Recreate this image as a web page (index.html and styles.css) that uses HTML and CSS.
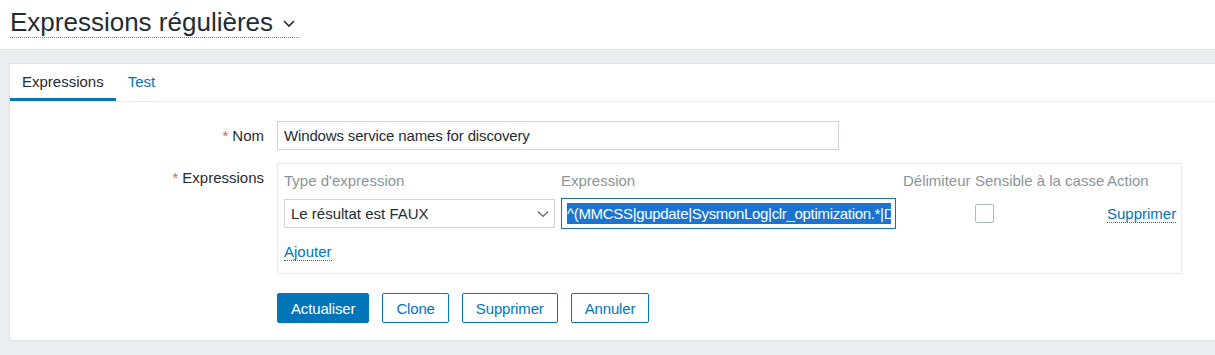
FILE: index.html
```html
<!DOCTYPE html>
<html lang="fr">
<head>
    <meta charset="UTF-8">
    <meta name="viewport" content="width=device-width, initial-scale=1.0">
    <title>Expressions régulières</title>
    <link rel="stylesheet" href="styles.css">
</head>
<body>
    <header class="page-header">
        <h1 class="page-title">
            Expressions régulières
            <svg class="title-chevron" width="14" height="9" viewBox="0 0 14 9">
                <path d="M2 2 L7 7 L12 2" fill="none" stroke="#1f2c33" stroke-width="1.6"/>
            </svg>
        </h1>
    </header>

    <main class="wrapper">
        <section class="panel">
            <nav class="tabs">
                <a class="tab active" href="#">Expressions</a>
                <a class="tab" href="#">Test</a>
            </nav>

            <form class="form-grid">
                <label class="form-label"><span class="req">*</span>Nom</label>
                <div class="form-field">
                    <input class="text-input name-input" type="text" value="Windows service names for discovery">
                </div>

                <label class="form-label label-top"><span class="req">*</span>Expressions</label>
                <div class="form-field">
                    <div class="expr-box">
                        <div class="expr-grid">
                            <div class="expr-head">Type d'expression</div>
                            <div class="expr-head">Expression</div>
                            <div class="expr-head">Délimiteur</div>
                            <div class="expr-head">Sensible à la casse</div>
                            <div class="expr-head">Action</div>

                            <div class="select-wrap">
                                <select class="select">
                                    <option>Le résultat est FAUX</option>
                                </select>
                                <svg class="select-arrow" width="12" height="8" viewBox="0 0 12 8">
                                    <path d="M1 1.5 L6 6.5 L11 1.5" fill="none" stroke="#5a656b" stroke-width="1.2"/>
                                </svg>
                            </div>
                            <div class="expr-input">
                                <div class="expr-clip">
                                    <span class="selected-text">^(MMCSS|gupdate|SysmonLog|clr_optimization.*|DPS|Tcpip)$</span>
                                </div>
                            </div>
                            <div></div>
                            <div><input class="checkbox" type="checkbox"></div>
                            <div><a class="link" href="#">Supprimer</a></div>
                        </div>
                        <div class="add-row"><a class="link" href="#">Ajouter</a></div>
                    </div>
                </div>

                <div></div>
                <div class="form-field buttons">
                    <button type="button" class="btn btn-primary">Actualiser</button>
                    <button type="button" class="btn btn-alt">Clone</button>
                    <button type="button" class="btn btn-alt">Supprimer</button>
                    <button type="button" class="btn btn-alt">Annuler</button>
                </div>
            </form>
        </section>
    </main>
</body>
</html>
```

FILE: styles.css
```css
body {
    margin: 0;
    font-family: "Liberation Sans", Arial, sans-serif;
    font-size: 15px;
    color: #1f2c33;
    background-color: #ebeef0;
    height: 355px;
    overflow: hidden;
}
.page-header {
    background-color: #ffffff;
    height: 50px;
    padding: 8px 0 0 10px;
    box-sizing: border-box;
    border-bottom: 1px solid #dfe4e7;
}
.page-title {
    display: inline-flex;
    align-items: center;
    margin: 0;
    font-size: 26px;
    font-weight: normal;
    line-height: 29px;
    border-bottom: 1px dotted #768d99;
    padding-right: 3px;
}
.title-chevron {
    margin-left: 9px;
    margin-top: 2px;
}
.wrapper {
    padding: 13px 0 0 9px;
}
.panel {
    background-color: #ffffff;
    border: 1px solid #dfe4e7;
    border-right-width: 0;
    padding-bottom: 17px;
}
.tabs {
    display: flex;
    border-bottom: 1px solid #ebeef0;
}
.tab {
    display: block;
    padding: 9px 12px 7px 12px;
    line-height: 18px;
    color: #0275b8;
    text-decoration: none;
    border-bottom: 3px solid transparent;
}
.tab.active {
    color: #1f2c33;
    border-bottom-color: #0275b8;
}
.form-grid {
    display: grid;
    grid-template-columns: 254px 1fr;
    column-gap: 13px;
    row-gap: 13px;
    padding-top: 19px;
}
.form-label {
    text-align: right;
    line-height: 29px;
}
.label-top {
    line-height: 18px;
    padding-top: 6px;
}
.req {
    color: #e45959;
    margin-right: 4px;
}
.text-input {
    font-family: inherit;
    font-size: 15px;
    letter-spacing: -0.15px;
    color: #1f2c33;
    height: 29px;
    box-sizing: border-box;
    border: 1px solid #ccd5d9;
    padding: 0 6px;
    outline: none;
}
.name-input {
    width: 562px;
}
.expr-box {
    width: 905px;
    box-sizing: border-box;
    border: 1px solid #e6ebee;
    padding: 8px 6px 12px 6px;
}
.expr-grid {
    display: grid;
    grid-template-columns: 271px 336px 66px 126px auto;
    column-gap: 6px;
    row-gap: 8px;
    align-items: center;
}
.expr-head {
    color: #8a9499;
    line-height: 18px;
    white-space: nowrap;
}
.select-wrap {
    position: relative;
    width: 271px;
}
.select {
    appearance: none;
    width: 100%;
    height: 29px;
    font-family: inherit;
    font-size: 15px;
    color: #1f2c33;
    background-color: #ffffff;
    border: 1px solid #ccd5d9;
    border-radius: 0;
    padding: 0 6px;
    outline: none;
}
.select-arrow {
    position: absolute;
    right: 6px;
    top: 11px;
}
.expr-input {
    width: 335px;
    height: 31px;
    box-sizing: border-box;
    border: 1px solid #1c6fae;
    padding: 4px 4px 0 5px;
}
.expr-clip {
    overflow: hidden;
    white-space: nowrap;
}
.selected-text {
    display: inline-block;
    background-color: #1c74d0;
    color: #ffffff;
    line-height: 21px;
    letter-spacing: -0.32px;
}
.checkbox {
    appearance: none;
    display: block;
    width: 19px;
    height: 19px;
    margin: 0;
    border: 1px solid #acbbc2;
    border-radius: 2px;
    background-color: #ffffff;
}
.link {
    color: #0275b8;
    text-decoration: none;
    border-bottom: 1px dotted #0275b8;
}
.add-row {
    margin-top: 14px;
    line-height: 18px;
}
.buttons {
    display: flex;
    gap: 13px;
    margin-top: 6px;
}
.btn {
    height: 30px;
    padding: 0 13px;
    font-family: inherit;
    font-size: 15px;
    letter-spacing: -0.15px;
    border-radius: 2px;
    cursor: pointer;
}
.btn-primary {
    background-color: #0275b8;
    border: 1px solid #0275b8;
    color: #ffffff;
}
.btn-alt {
    background-color: #ffffff;
    border: 1px solid #0275b8;
    color: #0275b8;
}
```
